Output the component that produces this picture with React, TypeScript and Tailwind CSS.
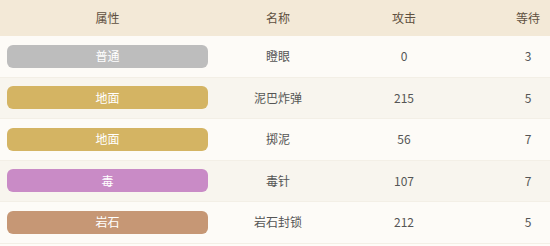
import React from "react";

const rows = [
  { type: "普通", color: "bg-[#bdbdbd]", name: "瞪眼", atk: "0", wait: "3" },
  { type: "地面", color: "bg-[#d4b463]", name: "泥巴炸弹", atk: "215", wait: "5" },
  { type: "地面", color: "bg-[#d4b463]", name: "掷泥", atk: "56", wait: "7" },
  { type: "毒", color: "bg-[#c98bc6]", name: "毒针", atk: "107", wait: "7" },
  { type: "岩石", color: "bg-[#c69775]", name: "岩石封锁", atk: "212", wait: "5" },
];

export default function App() {
  return (
    <div
      className="w-[550px] h-[246px] overflow-hidden bg-[#fefcf8]"
      style={{ fontFamily: '"Noto Sans CJK SC", "Liberation Sans", sans-serif' }}
    >
      <div className="w-[589px]">
        <div className="grid grid-cols-[215px_126px_126px_122px] h-[36px] items-center bg-[#f3e9d7] text-[12px] text-[#5e5040]">
          <div className="text-center">属性</div>
          <div className="text-center">名称</div>
          <div className="text-center">攻击</div>
          <div className="text-center">等待</div>
        </div>
        {rows.map((r, i) => (
          <div
            key={i}
            className={`grid grid-cols-[215px_126px_126px_122px] h-[41.5px] items-center text-[12px] text-[#555555] border-b border-[#f3efe6] ${
              i % 2 === 1 ? "bg-[#f8f5ee]" : "bg-[#fdfbf7]"
            }`}
          >
            <div className="pl-[7px] pr-[7px]">
              <div
                className={`${r.color} h-[23px] w-[201px] rounded-[6px] flex items-center justify-center text-white text-[12px]`}
              >
                {r.type}
              </div>
            </div>
            <div className="text-center">{r.name}</div>
            <div className="text-center">{r.atk}</div>
            <div className="text-center">{r.wait}</div>
          </div>
        ))}
      </div>
    </div>
  );
}
